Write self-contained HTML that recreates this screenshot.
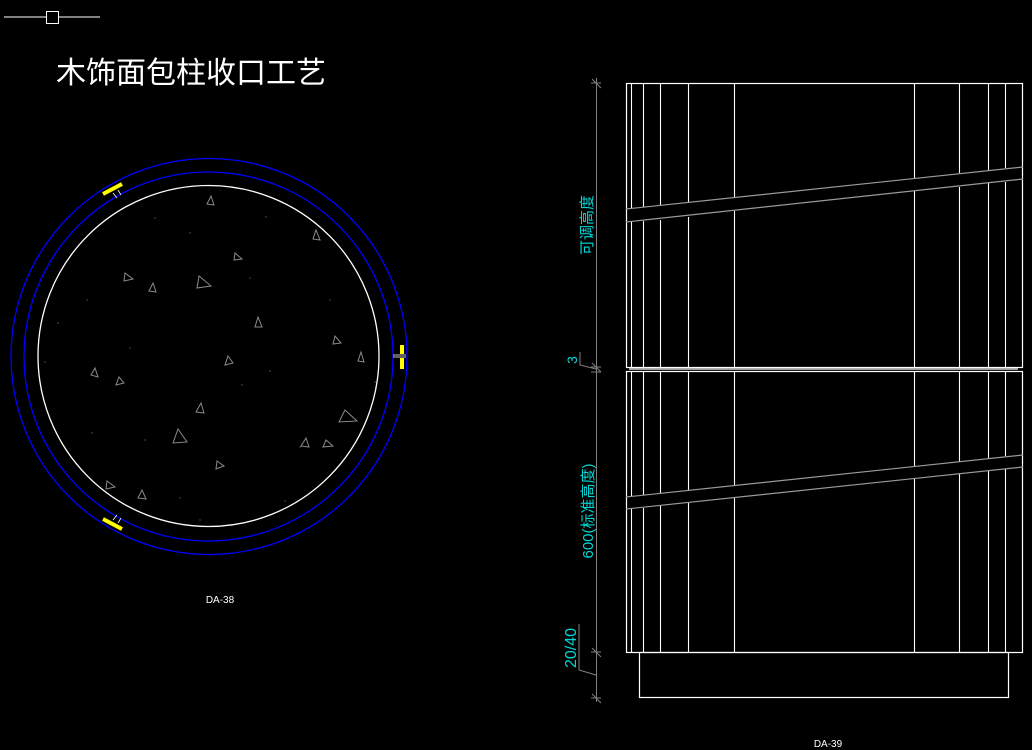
<!DOCTYPE html>
<html><head><meta charset="utf-8"><style>
html,body{margin:0;padding:0;background:#000;width:1032px;height:750px;overflow:hidden}
svg{display:block}
</style></head><body>
<svg width="1032" height="750" viewBox="0 0 1032 750" xmlns="http://www.w3.org/2000/svg">
<rect width="1032" height="750" fill="#000"/>
<!-- UCS mark -->
<line x1="4" y1="17" x2="100" y2="17" stroke="#fff" stroke-width="1"/>
<rect x="46.5" y="11.5" width="12" height="12" fill="#000" stroke="#fff"/>
<text x="56" y="83" font-family="'Liberation Sans','Noto Sans CJK SC',sans-serif" font-size="30" fill="#fff">木饰面包柱收口工艺</text>

<!-- circle plan -->
<circle cx="209" cy="356.5" r="198" fill="none" stroke="#0000ff" stroke-width="1.3"/>
<circle cx="208.5" cy="356.5" r="184.5" fill="none" stroke="#0000ff" stroke-width="1.3"/>
<circle cx="208.5" cy="356" r="170.5" fill="none" stroke="#fff" stroke-width="1.3"/>
<g stroke="#fff" stroke-width="0.8" fill="none">
<path d="M113 193 L117 198 M118 190 L121 195"/>
<path d="M113 520 L117 515 M118 523 L121 518"/>
<path d="M393 355 L406 355 M393 357 L406 357"/>
</g>
<g stroke="#ffff00" stroke-width="4" stroke-linecap="butt">
<line x1="103" y1="194" x2="122" y2="184"/>
<line x1="103" y1="519" x2="122" y2="529"/>
<line x1="402" y1="345" x2="402" y2="354"/>
<line x1="402" y1="358" x2="402" y2="369"/>
</g>
<g stroke="#8a8a8a" stroke-width="1" fill="none">
<polygon points="211,196 214,205 207,204"/>
<polygon points="316,230 320,240 313,239"/>
<polygon points="235,253 242,259 234,260"/>
<polygon points="125,273 133,279 124,281"/>
<polygon points="153,283 156,292 149,291"/>
<polygon points="199,276 211,286 197,288"/>
<polygon points="258,317 262,327 255,327"/>
<polygon points="335,336 341,343 333,344"/>
<polygon points="361,352 364,362 358,361"/>
<polygon points="228,356 233,363 225,365"/>
<polygon points="95,368 98,377 91,375"/>
<polygon points="119,377 124,383 116,385"/>
<polygon points="201,403 204,413 196,412"/>
<polygon points="345,410 357,421 339,422"/>
<polygon points="178,429 187,442 173,443"/>
<polygon points="306,438 309,447 301,446"/>
<polygon points="326,440 333,446 323,447"/>
<polygon points="217,461 224,466 216,469"/>
<polygon points="107,481 115,487 106,489"/>
<polygon points="142,490 146,499 138,498"/>
</g>
<g fill="#777">
<circle cx="155" cy="218" r=".6"/><circle cx="266" cy="217" r=".6"/><circle cx="58" cy="323" r=".6"/><circle cx="45" cy="362" r=".6"/><circle cx="130" cy="348" r=".6"/><circle cx="242" cy="385" r=".6"/><circle cx="375" cy="382" r=".6"/><circle cx="300" cy="447" r=".6"/><circle cx="180" cy="498" r=".6"/><circle cx="200" cy="520" r=".6"/><circle cx="285" cy="501" r=".6"/><circle cx="92" cy="433" r=".6"/><circle cx="145" cy="440" r=".6"/><circle cx="270" cy="371" r=".6"/><circle cx="330" cy="300" r=".6"/><circle cx="190" cy="233" r=".6"/><circle cx="250" cy="278" r=".6"/><circle cx="87" cy="300" r=".6"/>
</g>
<text x="220" y="603" text-anchor="middle" font-family="'Liberation Sans',sans-serif" font-size="10" fill="#fff">DA-38</text>

<!-- elevation -->
<g stroke="#fff" stroke-width="1.2" fill="none">
<rect x="626.5" y="83.5" width="396" height="284"/>
<rect x="626.5" y="371.5" width="396" height="281"/>
<line x1="629" y1="369" x2="1018" y2="369"/>
<rect x="639.5" y="652.5" width="369" height="45"/>
</g>
<g stroke="#fff" stroke-width="1.1">
<path d="M631.5 84 V208 M631.5 222 V367 M643.5 84 V207 M643.5 221 V367 M660.5 84 V206 M660.5 220 V367 M688.5 84 V203 M688.5 217 V367 M734.5 84 V198 M734.5 211 V367 M914.5 84 V178 M914.5 191 V367 M959.5 84 V173 M959.5 187 V367 M988.5 84 V170 M988.5 183 V367 M1005.5 84 V168 M1005.5 182 V367"/>
<path d="M631.5 372 V496 M631.5 509 V652 M643.5 372 V495 M643.5 508 V652 M660.5 372 V493 M660.5 506 V652 M688.5 372 V490 M688.5 503 V652 M734.5 372 V485 M734.5 498 V652 M914.5 372 V466 M914.5 479 V652 M959.5 372 V462 M959.5 474 V652 M988.5 372 V458 M988.5 471 V652 M1005.5 372 V456 M1005.5 469 V652"/>
</g>
<g stroke="#9a9a9a" stroke-width="1.2">
<line x1="626" y1="209" x2="1023" y2="167"/>
<line x1="626" y1="222" x2="1023" y2="179"/>
<line x1="626" y1="497" x2="1023" y2="455"/>
<line x1="626" y1="509" x2="1023" y2="467"/>
</g>
<g stroke="#808080" stroke-width="1" fill="none">
<line x1="596.5" y1="78" x2="596.5" y2="702"/>
<line x1="591" y1="83" x2="601" y2="83"/>
<line x1="592" y1="79" x2="601" y2="88"/>
<line x1="591" y1="367" x2="601" y2="367"/>
<line x1="592" y1="363" x2="601" y2="372"/>
<line x1="591" y1="372" x2="601" y2="372"/>
<line x1="591" y1="652" x2="601" y2="652"/>
<line x1="592" y1="648" x2="601" y2="657"/>
<line x1="591" y1="698" x2="601" y2="698"/>
<line x1="592" y1="694" x2="601" y2="703"/>
<polyline points="580,352 580,365 596,369"/>
<polyline points="579,624 579,670 596,675"/>
</g>
<g font-family="'Liberation Sans','Noto Sans CJK SC',sans-serif" fill="#00d8d8">
<text transform="translate(592,225) rotate(-90)" text-anchor="middle" font-size="15">可调高度</text>
<text transform="translate(577,360) rotate(-90)" text-anchor="middle" font-size="14">3</text>
<text transform="translate(593,511) rotate(-90)" text-anchor="middle" font-size="15">600(标准高度)</text>
<text transform="translate(576,648) rotate(-90)" text-anchor="middle" font-size="16">20/40</text>
</g>
<text x="828" y="747" text-anchor="middle" font-family="'Liberation Sans',sans-serif" font-size="10" fill="#fff">DA-39</text>
</svg>
</body></html>
